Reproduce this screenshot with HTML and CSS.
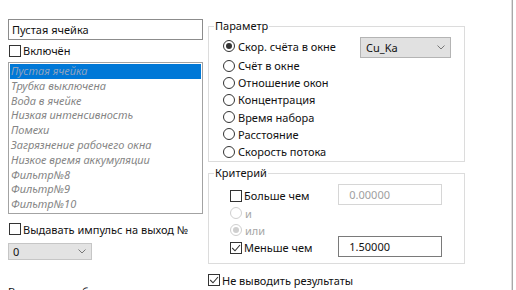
FILE: index.html
```html
<html>
  <head>
    <title>Фильтр ячейки</title>
    <meta charset="utf-8" />
    <link rel="stylesheet" href="styles.css">
  </head>
  <body>
    <div class="window">

      <div class="left">
        <div class="textbox">Пустая ячейка</div>
        <label class="check"><span class="box"></span>Включён</label>
        <ul class="listbox">
          <li class="sel">Пустая ячейка</li>
          <li>Трубка выключена</li>
          <li>Вода в ячейке</li>
          <li>Низкая интенсивность</li>
          <li>Помехи</li>
          <li>Загрязнение рабочего окна</li>
          <li>Низкое время аккумуляции</li>
          <li>Фильтр№8</li>
          <li>Фильтр№9</li>
          <li>Фильтр№10</li>
        </ul>
        <label class="check pulse"><span class="box"></span>Выдавать импульс на выход №</label>
        <div class="combo small">
          <span>0</span>
          <svg width="8" height="5" viewBox="0 0 8 5"><path d="M0.5 0.5 L4 4 L7.5 0.5" fill="none" stroke="#777" stroke-width="1"/></svg>
        </div>
        <div class="msg">Выводить сообщение</div>
      </div>

      <div class="right">
        <fieldset class="group param">
          <legend>Параметр</legend>
          <div class="row first">
            <label class="radio"><span class="dot on"></span>Скор. счёта в окне</label>
            <div class="combo wide">
              <span>Cu_Ka</span>
              <svg width="8" height="5" viewBox="0 0 8 5"><path d="M0.5 0.5 L4 4 L7.5 0.5" fill="none" stroke="#777" stroke-width="1"/></svg>
            </div>
          </div>
          <div class="row"><label class="radio"><span class="dot"></span>Счёт в окне</label></div>
          <div class="row"><label class="radio"><span class="dot"></span>Отношение окон</label></div>
          <div class="row"><label class="radio"><span class="dot"></span>Концентрация</label></div>
          <div class="row"><label class="radio"><span class="dot"></span>Время набора</label></div>
          <div class="row"><label class="radio"><span class="dot"></span>Расстояние</label></div>
          <div class="row"><label class="radio"><span class="dot"></span>Скорость потока</label></div>
        </fieldset>

        <fieldset class="group crit">
          <legend>Критерий</legend>
          <div class="row">
            <label class="check label-col"><span class="box"></span>Больше чем</label>
            <div class="field off">0.00000</div>
          </div>
          <div class="row"><label class="radio off"><span class="dot"></span>и</label></div>
          <div class="row"><label class="radio off"><span class="dot on"></span>или</label></div>
          <div class="row">
            <label class="check label-col"><span class="box"><svg width="10" height="10" viewBox="0 0 10 10"><path d="M1.2 5 L4 7.8 L9 2" fill="none" stroke="#333" stroke-width="1.1"/></svg></span>Меньше чем</label>
            <div class="field">1.50000</div>
          </div>
        </fieldset>

        <label class="check results"><span class="box"><svg width="10" height="10" viewBox="0 0 10 10"><path d="M1.2 5 L4 7.8 L9 2" fill="none" stroke="#333" stroke-width="1.1"/></svg></span>Не выводить результаты</label>
      </div>

      <div class="edge"></div>
    </div>
  </body>
</html>
```

FILE: styles.css
```css
body{
    margin: 0;
    padding: 0;
    height: 290px;
    overflow: hidden;
    background-color: #fff;
    color: #111;
    font-family: "Noto Sans", "Segoe UI", sans-serif;
    font-size: 11px;
}

.window{
    display: flex;
    flex-direction: row;
    height: 290px;
}

.left{
    width: 195px;
    margin-left: 8px;
    padding-top: 19px;
    display: flex;
    flex-direction: column;
}

.right{
    width: 257px;
    margin-left: 5px;
    padding-top: 18px;
    display: flex;
    flex-direction: column;
}

.edge{
    margin-left: 46px;
    width: 1px;
    height: 100%;
    background-color: #dedede;
    border-right: 1px solid #a8a8a8;
}

/* edit boxes */
.textbox{
    box-sizing: border-box;
    height: 21px;
    border: 1px solid #8c8c8c;
    padding: 0 3px;
    line-height: 19px;
}

.field{
    box-sizing: border-box;
    width: 104px;
    height: 21px;
    margin-bottom: 2px;
    border: 1px solid #7a7a7a;
    padding-right: 51px;
    line-height: 19px;
    text-align: right;
    flex-shrink: 0;
}

.field.off{
    border-color: #d6d6d6;
    color: #a0a0a0;
}

/* check boxes and radios */
.check,
.radio{
    display: flex;
    flex-direction: row;
    align-items: center;
    height: 16px;
    white-space: nowrap;
}

.check{
    gap: 2px;
}

.radio{
    gap: 3px;
}

.box{
    box-sizing: border-box;
    width: 12px;
    height: 12px;
    border: 1px solid #333;
    background-color: #fff;
    display: flex;
    align-items: center;
    justify-content: center;
    flex-shrink: 0;
}

.dot{
    box-sizing: border-box;
    width: 12px;
    height: 12px;
    border: 1px solid #333;
    border-radius: 50%;
    background-color: #fff;
    display: flex;
    align-items: center;
    justify-content: center;
    flex-shrink: 0;
}

.dot.on::after{
    content: "";
    width: 6px;
    height: 6px;
    border-radius: 50%;
    background-color: #333;
}

.radio.off{
    color: #a6a6a6;
}

.radio.off .dot{
    border-color: #cfcfcf;
}

.radio.off .dot.on::after{
    background-color: #cfcfcf;
}

.left .check{
    margin-top: 3px;
    margin-left: 1px;
}

.left .check.pulse{
    margin-top: 8px;
}

/* list */
.listbox{
    box-sizing: border-box;
    height: 153px;
    margin: 4px 0 0 0;
    padding: 1px;
    list-style: none;
    border: 1px solid #a3a3a3;
    color: #858585;
    font-style: italic;
}

.listbox li{
    height: 14.8px;
    line-height: 14.8px;
    padding-left: 1px;
    white-space: nowrap;
}

.listbox li.sel{
    background-color: #0078d7;
    color: #8da3bf;
}

/* combo boxes */
.combo{
    box-sizing: border-box;
    height: 21px;
    display: flex;
    flex-direction: row;
    align-items: center;
    justify-content: space-between;
    background-color: #e3e3e3;
    border: 1px solid #c6c6c6;
    padding: 0 5px 0 4px;
}

.combo.small{
    width: 84px;
    margin-top: 6px;
}

.combo.wide{
    width: 91px;
    margin-top: 3px;
    padding-left: 5px;
    border-color: #b4b4b4;
    background-color: #e1e1e1;
}

.msg{
    margin-top: 24px;
    line-height: 16px;
}

/* group boxes */
.group{
    margin: 0;
    border: 1px solid #dcdcdc;
    min-width: 0;
}

.group legend{
    padding: 0 1px;
    line-height: 16px;
}

.param{
    padding: 1px 0 1px 14px;
}

.param legend{
    margin-left: -9px;
}

.crit{
    margin-top: 3px;
    padding: 6px 0 7px 21px;
}

.crit legend{
    margin-left: -16px;
}

.row{
    display: flex;
    flex-direction: row;
    align-items: center;
    height: 17.2px;
}

.row.first{
    height: 22px;
}

.param .row.first .radio{
    width: 137px;
}

.crit .row{
    height: 17.3px;
}

.label-col{
    width: 108px;
}

.results{
    margin-top: 8px;
}
```
